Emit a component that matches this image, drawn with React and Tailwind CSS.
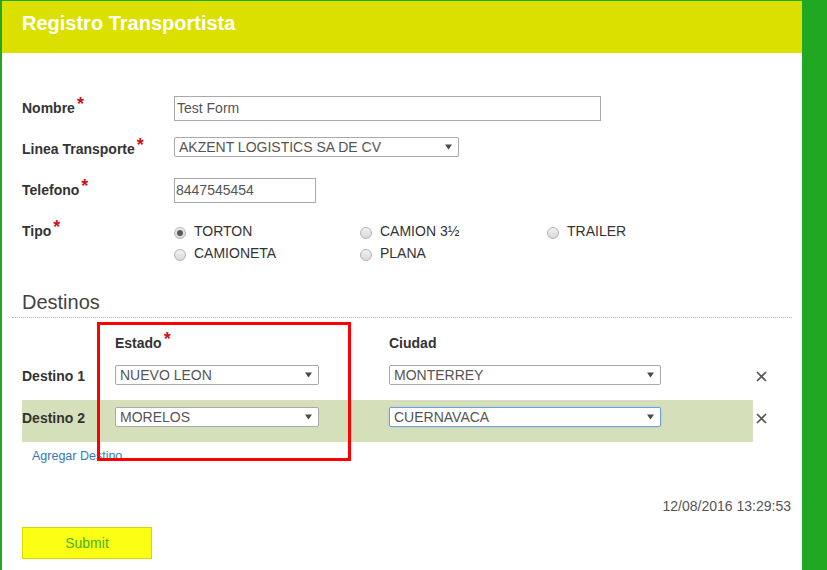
import React from 'react'

const FONT = { fontFamily: '"Liberation Sans", Arial, sans-serif' }

function Star() {
  return (
    <span className="relative -top-[3px] ml-[2px] text-[18px] leading-[0] text-[#c9141c]">*</span>
  )
}

function Arrow() {
  return (
    <svg width="7" height="6" viewBox="0 0 7 6" className="shrink-0">
      <polygon points="0,0.5 7,0.5 3.5,5.5" fill="#4a4a4a" />
    </svg>
  )
}

function Select({ value, className = '', focus = false }) {
  return (
    <div
      className={`flex h-[20px] items-center justify-between rounded-[2px] border bg-white pl-[4px] pr-[6px] text-[14px] leading-[18px] text-[#555] ${
        focus ? 'border-[#6f9fd8] shadow-[0_0_2px_#9cc2ee]' : 'border-[#a9a9a9]'
      } ${className}`}
    >
      <span>{value}</span>
      <Arrow />
    </div>
  )
}

function Radio({ label, checked }) {
  return (
    <div className="flex h-[22px] items-center">
      <span className="mt-[3px] flex h-[12px] w-[12px] items-center justify-center rounded-full border border-[#b4b4b4] bg-gradient-to-b from-[#f2f2f2] to-[#d9d9d9]">
        {checked && <span className="h-[6px] w-[6px] rounded-full bg-[#5a5a5a]" />}
      </span>
      <span className="ml-[8px] text-[14px] leading-[22px] text-[#333]">{label}</span>
    </div>
  )
}

function Cross() {
  return (
    <svg width="11" height="11" viewBox="0 0 11 11" className="ml-[3px] mt-[13px]">
      <path d="M1 1 L10 10 M10 1 L1 10" stroke="#555" strokeWidth="1.7" />
    </svg>
  )
}

function Row({ label, estado, ciudad, shaded, focus }) {
  return (
    <div className="flex items-start">
      <div className={`flex h-[42px] w-[731px] pt-[7px] ${shaded ? 'bg-[#d5dfba]' : ''}`}>
        <div className="w-[93px] pt-px text-[14px] font-bold leading-[20px] text-[#333]">{label}</div>
        <div className="w-[274px]">
          <Select value={estado} className="w-[204px]" />
        </div>
        <Select value={ciudad} className="w-[272px]" focus={focus} />
      </div>
      <Cross />
    </div>
  )
}

export default function App() {
  const labelCls = 'w-[152px] pt-[2px] text-[14px] font-bold leading-[20px] text-[#333]'

  return (
    <div style={FONT} className="relative h-[570px] w-[827px] bg-[#21a822] pl-[2px] pr-[25px] pt-px">
      <div className="h-full overflow-hidden bg-white">
        <div className="h-[52px] bg-[#dce000] pl-[20px] pt-[11px] text-[20px] font-bold leading-[23px] text-white">
          Registro Transportista
        </div>

        <div className="pl-[20px] pt-[43px]">
          <div className="flex h-[41px]">
            <div className={labelCls}>
              Nombre<Star />
            </div>
            <div className="h-[25px] w-[427px] border border-[#a9a9a9] px-[2px] text-[14px] leading-[23px] text-[#555]">
              Test Form
            </div>
          </div>

          <div className="flex h-[41px]">
            <div className={labelCls}>
              Linea Transporte<Star />
            </div>
            <Select value="AKZENT LOGISTICS SA DE CV" className="w-[285px]" />
          </div>

          <div className="flex h-[42px]">
            <div className={labelCls}>
              Telefono<Star />
            </div>
            <div className="h-[25px] w-[142px] border border-[#a9a9a9] px-[1px] text-[14px] leading-[23px] text-[#555]">
              8447545454
            </div>
          </div>

          <div className="flex">
            <div className="w-[152px] text-[14px] font-bold leading-[22px] text-[#333]">
              Tipo<Star />
            </div>
            <div className="grid grid-cols-[186px_187px_186px]">
              <Radio label="TORTON" checked />
              <Radio label="CAMION 3½" />
              <Radio label="TRAILER" />
              <Radio label="CAMIONETA" />
              <Radio label="PLANA" />
            </div>
          </div>
        </div>

        <div className="mx-[10px] mt-[25px] border-b border-dotted border-[#b5b5b5] pb-[3px] pl-[10px] pt-px text-[20px] leading-[24px] text-[#444]">
          Destinos
        </div>

        <div className="pl-[20px]">
          <div className="flex h-[40px] pt-[15px] text-[14px] font-bold leading-[20px] text-[#333]">
            <div className="w-[93px]" />
            <div className="w-[274px]">
              Estado<Star />
            </div>
            <div>Ciudad</div>
          </div>
          <Row label="Destino 1" estado="NUEVO LEON" ciudad="MONTERREY" />
          <Row label="Destino 2" estado="MORELOS" ciudad="CUERNAVACA" shaded focus />
          <div className="mt-[6px] pl-[10px] text-[12.5px] leading-[17px] text-[#337ab7]">
            <a href="#">Agregar Destino</a>
          </div>
        </div>

        <div className="mt-[32px] pr-[11px] text-right text-[14px] leading-[18px] text-[#555]">
          12/08/2016 13:29:53
        </div>

        <div className="ml-[20px] mt-[12px]">
          <button className="h-[32px] w-[130px] border border-[#d8d400] bg-[#faff14] text-[14px] text-[#4caf25]">
            Submit
          </button>
        </div>
      </div>

      <div className="pointer-events-none absolute left-[97px] top-[322px] h-[139px] w-[254px] border-[3px] border-[#ff0000]" />
    </div>
  )
}
